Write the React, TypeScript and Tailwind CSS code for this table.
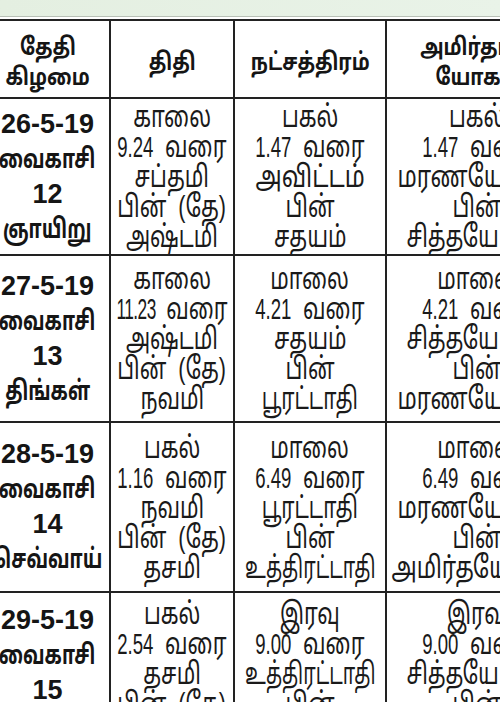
import React from "react";

const FONT = '"Liberation Sans", "Noto Sans Tamil", "Lohit Tamil", "Noto Sans", sans-serif';

type Row = { date: string[]; cols: string[][] };

const rows: Row[] = [
  {
    date: ["26-5-19", "வைகாசி", "12", "ஞாயிறு"],
    cols: [
      ["காலை", "9.24|வரை", "சப்தமி", "பின்  (தே)", "அஷ்டமி"],
      ["பகல்", "1.47|வரை", "அவிட்டம்", "பின்", "சதயம்"],
      ["பகல்", "1.47|வரை", "மரணயோகம்", "பின்", "சித்தயோகம்"],
    ],
  },
  {
    date: ["27-5-19", "வைகாசி", "13", "திங்கள்"],
    cols: [
      ["காலை", "11.23|வரை", "அஷ்டமி", "பின்  (தே)", "நவமி"],
      ["மாலை", "4.21|வரை", "சதயம்", "பின்", "பூரட்டாதி"],
      ["மாலை", "4.21|வரை", "சித்தயோகம்", "பின்", "மரணயோகம்"],
    ],
  },
  {
    date: ["28-5-19", "வைகாசி", "14", "செவ்வாய்"],
    cols: [
      ["பகல்", "1.16|வரை", "நவமி", "பின்  (தே)", "தசமி"],
      ["மாலை", "6.49|வரை", "பூரட்டாதி", "பின்", "உத்திரட்டாதி"],
      ["மாலை", "6.49|வரை", "மரணயோகம்", "பின்", "அமிர்தயோகம்"],
    ],
  },
  {
    date: ["29-5-19", "வைகாசி", "15", "புதன்"],
    cols: [
      ["பகல்", "2.54|வரை", "தசமி", "பின்  (தே)", "ஏகாதசி"],
      ["இரவு", "9.00|வரை", "உத்திரட்டாதி", "பின்", "ரேவதி"],
      ["இரவு", "9.00|வரை", "சித்தயோகம்", "பின்", "மரணயோகம்"],
    ],
  },
];

const BASE = "whitespace-pre text-[30px] leading-[30px] text-[#1a1a1a]";

function scaleFor(text: string): string {
  if (text === "உத்திரட்டாதி") return "scale-x-[0.65]";
  if (text === "பூரட்டாதி") return "scale-x-[0.69]";
  if (text === "அவிட்டம்") return "scale-x-[0.78]";
  if (text === "அமிர்தயோகம்" || text === "மரணயோகம்") return "scale-x-[0.75]";
  return "scale-x-[0.72]";
}

function Line({ text }: { text: string }) {
  if (text.includes("|")) {
    const [num, word] = text.split("|");
    const wide = num.length > 4;
    return (
      <div className={`${BASE} flex items-baseline scale-x-[0.72]`}>
        <span
          className={
            wide
              ? "inline-block origin-left scale-x-[0.8] mr-[-15px] tracking-[-1px]"
              : "inline-block origin-left scale-x-[0.86] mr-[-8px]"
          }
        >
          {num}
        </span>
        <span className="ml-[16px]">{word}</span>
      </div>
    );
  }
  return <div className={`${BASE} ${scaleFor(text)}`}>{text}</div>;
}

function Cell({ lines }: { lines: string[] }) {
  return (
    <div className="bg-white flex flex-col items-center justify-center overflow-hidden pt-[1px]">
      {lines.map((l, i) => (
        <Line key={i} text={l} />
      ))}
    </div>
  );
}

function DateCell({ lines }: { lines: string[] }) {
  return (
    <div className="bg-white flex flex-col items-center justify-center overflow-hidden">
      {lines.map((l, i) => {
        const isNum = /^[0-9-]+$/.test(l);
        return (
          <div
            key={i}
            className={
              isNum
                ? "whitespace-nowrap text-[27px] leading-[35px] font-bold text-[#151515]"
                : "whitespace-nowrap text-[27px] leading-[35px] font-bold text-[#151515] scale-x-[0.7]"
            }
          >
            {l}
          </div>
        );
      })}
    </div>
  );
}

function Header({ lines }: { lines: string[] }) {
  return (
    <div className="bg-white flex flex-col items-center justify-center overflow-hidden pt-[6px]">
      {lines.map((l, i) => (
        <div key={i} className="whitespace-nowrap text-[24px] leading-[30px] font-bold text-[#151515] scale-x-[0.8]">
          {l}
        </div>
      ))}
    </div>
  );
}

export default function App() {
  return (
    <div className="w-[500px] h-[702px] overflow-hidden bg-white" style={{ fontFamily: FONT }}>
      <div className="h-[16px] bg-gradient-to-r from-[#e4efe1] to-[#e9f3e8]" />
      <div className="h-[1px] bg-[#b8c0b6]" />
      <div className="h-[2px] bg-white" />
      <div className="ml-[-14px] w-[580px] bg-[#222] pt-[2px] grid grid-cols-[123px_122px_150px_180px] grid-rows-[76px_155px_165px_168px_160px] gap-[2px]">
        <Header lines={["தேதி", "கிழமை"]} />
        <Header lines={["திதி"]} />
        <Header lines={["நட்சத்திரம்"]} />
        <Header lines={["அமிர்தாதி", "யோகம்"]} />
        {rows.map((r, i) => (
          <React.Fragment key={i}>
            <DateCell lines={r.date} />
            {r.cols.map((c, j) => (
              <Cell key={j} lines={c} />
            ))}
          </React.Fragment>
        ))}
      </div>
    </div>
  );
}
